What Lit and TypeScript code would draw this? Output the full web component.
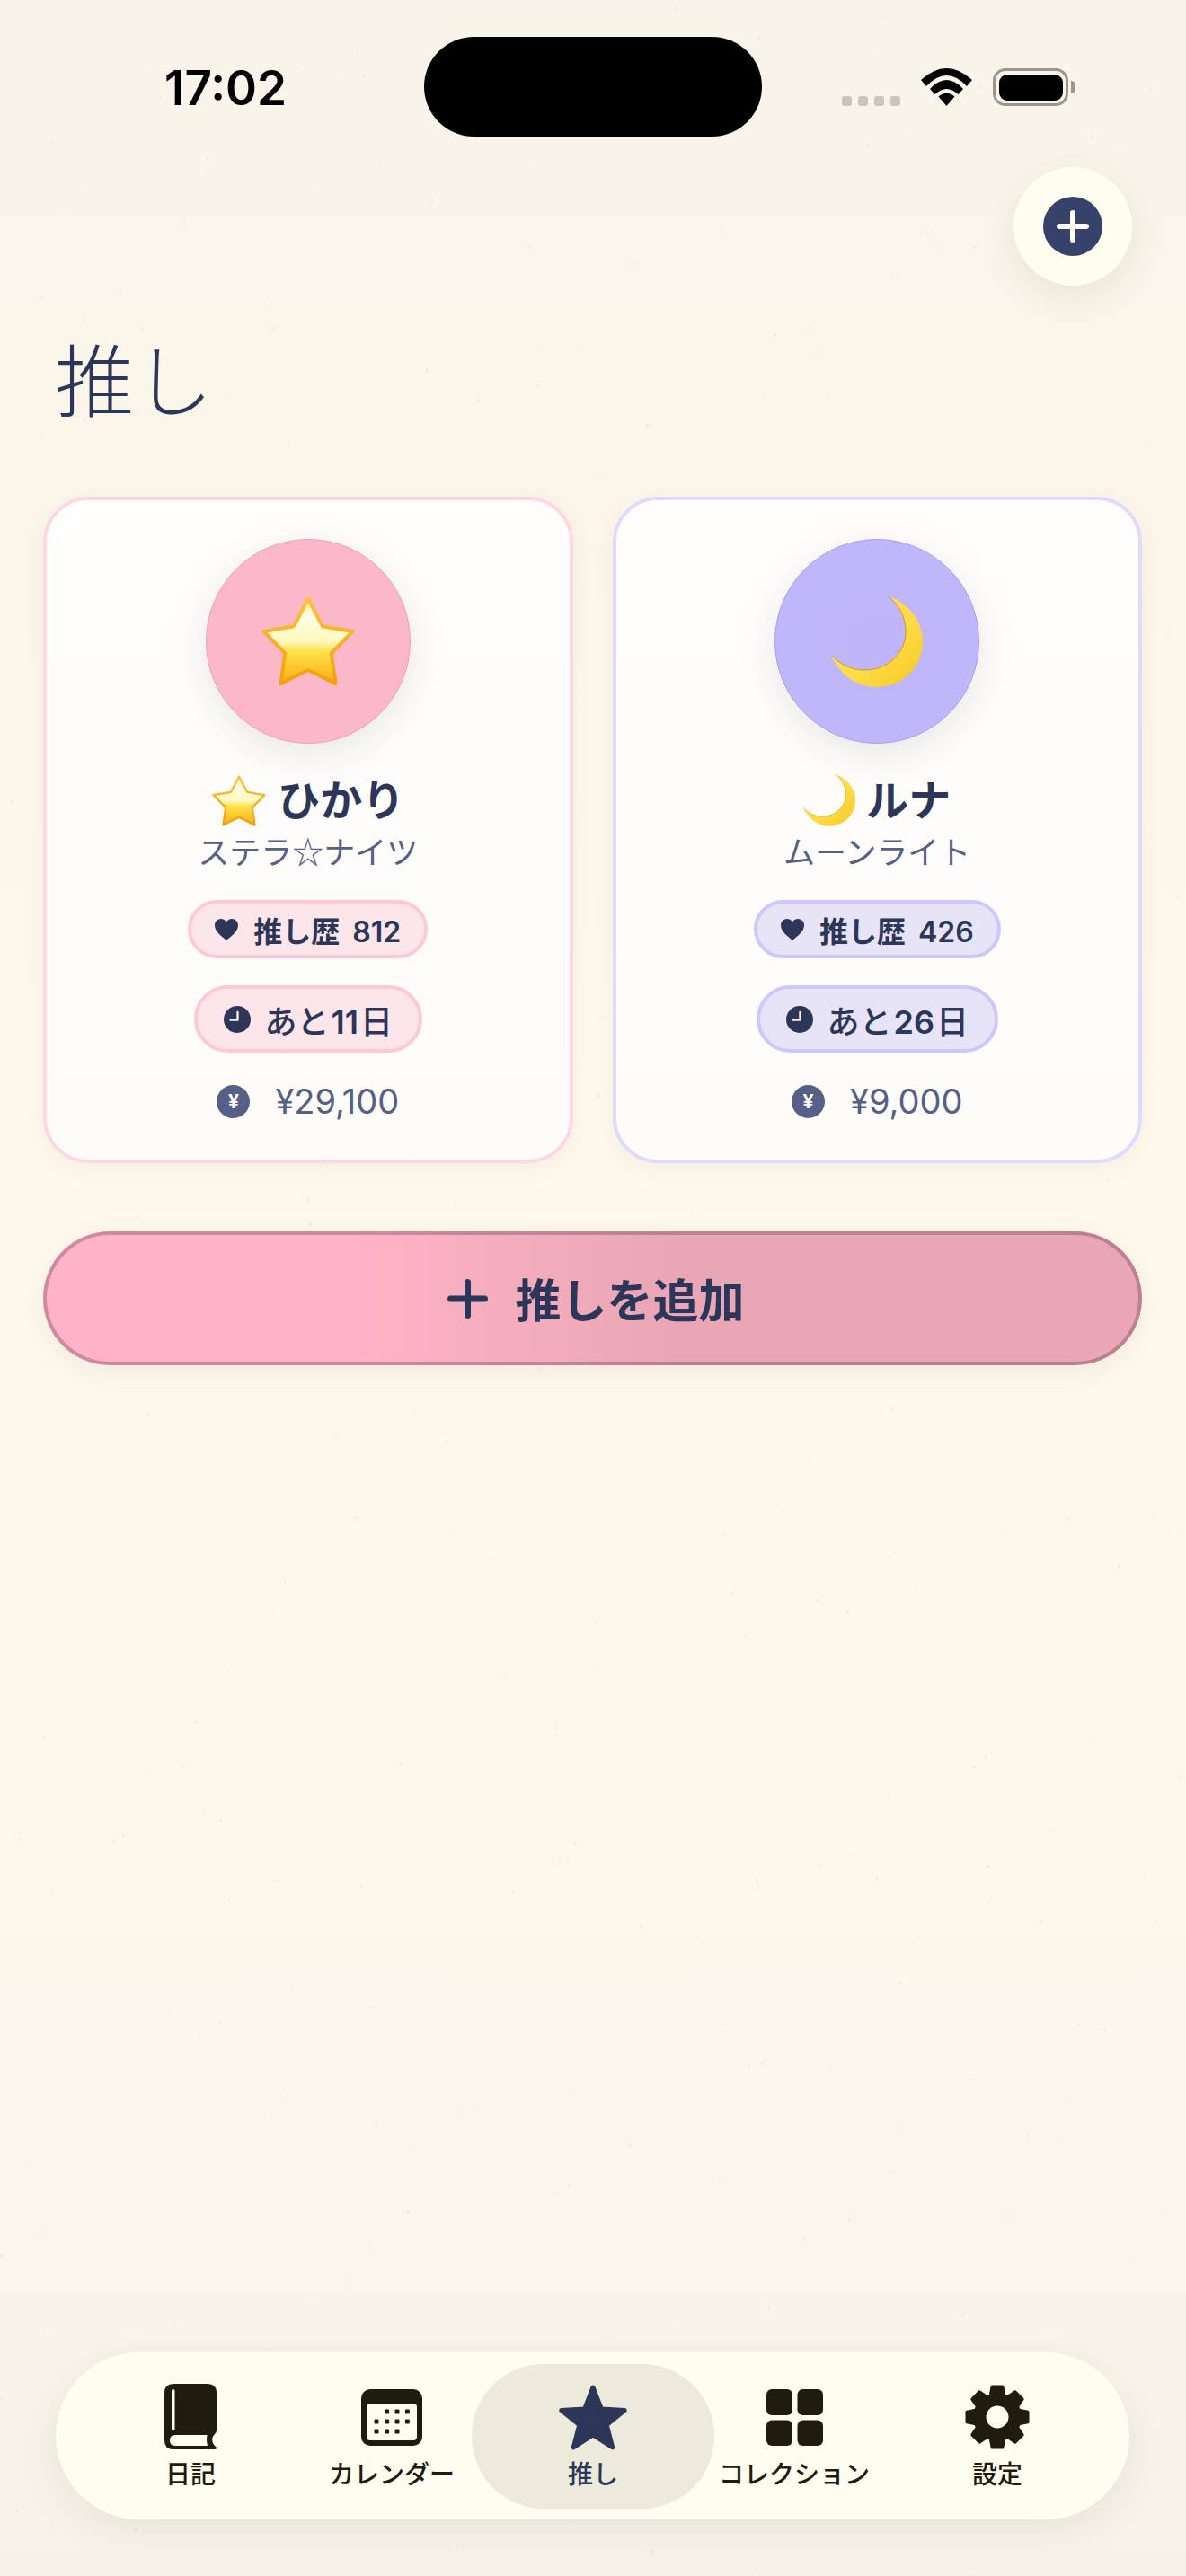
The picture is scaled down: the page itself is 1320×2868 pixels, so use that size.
import { LitElement, html, css, svg } from "lit";
import { customElement } from "lit/decorators.js";

function starPoints(cx: number, cy: number, R: number, r: number): string {
  const pts: string[] = [];
  for (let i = 0; i < 10; i++) {
    const a = -Math.PI / 2 + (i * Math.PI) / 5;
    const rad = i % 2 === 0 ? R : r;
    pts.push(`${(cx + rad * Math.cos(a)).toFixed(2)},${(cy + rad * Math.sin(a)).toFixed(2)}`);
  }
  return pts.join(" ");
}

function gearPoints(cx: number, cy: number): string {
  const pts: string[] = [];
  const teeth = 8;
  const outer = 34.5;
  const root = 25.5;
  for (let i = 0; i < teeth; i++) {
    const c = -Math.PI / 2 + (i * 2 * Math.PI) / teeth;
    const w1 = 0.27;
    const w2 = 0.17;
    [
      [root, c - w1 - 0.04],
      [outer, c - w2],
      [outer, c + w2],
      [root, c + w1 + 0.04],
    ].forEach(([rad, a]) => {
      pts.push(`${(cx + rad * Math.cos(a)).toFixed(2)},${(cy + rad * Math.sin(a)).toFixed(2)}`);
    });
  }
  return pts.join(" ");
}

const specks = (() => {
  let s = 4711;
  const rnd = () => {
    s = (s * 16807) % 2147483647;
    return s / 2147483647;
  };
  const out: { x: number; y: number; r: number; o: number }[] = [];
  for (let i = 0; i < 420; i++) {
    out.push({ x: rnd() * 1320, y: rnd() * 2868, r: 0.7 + rnd() * 0.8, o: 0.03 + rnd() * 0.07 });
  }
  return out;
})();

const emojiStar = (w: number, h: number) => html`
  <svg class="emoji" width=${w} height=${h} viewBox="0 0 108 102">
    <defs>
      <linearGradient id="sg" x1="0" y1="0" x2="0" y2="1">
        <stop offset="0" stop-color="#ffe98f" />
        <stop offset=".2" stop-color="#fffde6" />
        <stop offset=".5" stop-color="#fff8bd" />
        <stop offset=".62" stop-color="#ffe14a" />
        <stop offset="1" stop-color="#f8ad12" />
      </linearGradient>
      <linearGradient id="ss" x1="0" y1="0" x2="0" y2="1">
        <stop offset="0" stop-color="#fcc236" />
        <stop offset="1" stop-color="#f3a010" />
      </linearGradient>
    </defs>
    <polygon
      points=${starPoints(54, 56, 52, 27)}
      fill="url(#sg)"
      stroke="url(#ss)"
      stroke-width="4"
      stroke-linejoin="round"
    />
  </svg>
`;

const emojiMoon = (w: number, h: number) => html`
  <svg class="emoji" width=${w} height=${h} viewBox="0 0 102 101">
    <defs>
      <linearGradient id="mg" x1="0" y1="0" x2="1" y2="1">
        <stop offset="0" stop-color="#ffe55a" />
        <stop offset=".6" stop-color="#fddb45" />
        <stop offset="1" stop-color="#f6c720" />
      </linearGradient>
    </defs>
    <path
      d="M64 0C88 8 102 30 102 50C102 80 78 101 50 101C30 101 10 88 0 65C12 78 25 82 38 82C65 82 85 60 83 36C82 22 76 10 64 0Z"
      fill="url(#mg)"
    />
    <path d="M64 0C76 10 82 22 83 36C85 60 65 82 38 82C25 82 12 78 0 65" fill="none" stroke="#d9951a" stroke-width="1" />
  </svg>
`;

const heart = html`
  <svg class="ic" width="26" height="24" viewBox="0 0 26 24">
    <path
      d="M13 24C9 20 0 14.500 0 7.200C0 3 3.100 0 7 0C9.500 0 11.800 1.300 13 3.500C14.200 1.300 16.500 0 19 0C22.900 0 26 3 26 7.200C26 14.500 17 20 13 24Z"
      fill="#2b3659"
    />
  </svg>
`;

const clock = html`
  <svg class="ic" width="30" height="30" viewBox="0 0 30 30">
    <circle cx="15" cy="15" r="15" fill="#2b3659" />
    <path d="M15.500 7V15.500H7.500" fill="none" stroke="#fdf0f0" stroke-width="2.400" stroke-linecap="round" stroke-linejoin="round" />
  </svg>
`;

interface Oshi {
  cls: string;
  emoji: (w: number, h: number) => unknown;
  big: [number, number];
  small: [number, number];
  name: string;
  sub: string;
  hist: string;
  days: string;
  money: string;
}

const oshis: Oshi[] = [
  { cls: "pink", emoji: emojiStar, big: [108, 102], small: [62, 59], name: "ひかり", sub: "ステラ☆ナイツ", hist: "812", days: "11", money: "¥29,100" },
  { cls: "lav", emoji: emojiMoon, big: [102, 101], small: [58, 58], name: "ルナ", sub: "ムーンライト", hist: "426", days: "26", money: "¥9,000" },
];

@customElement("app-root")
export class AppRoot extends LitElement {
  static styles = css`
    :host {
      display: block;
      width: 1320px;
      font-family: "Noto Sans CJK JP", "Noto Sans", sans-serif;
      color: #2b3659;
    }
    .page {
      position: relative;
      width: 1320px;
      height: 2868px;
      display: flex;
      flex-direction: column;
      overflow: hidden;
      background: linear-gradient(180deg, #f8f4e9 0%, #fcf6ea 22%, #fef8ec 42%, #fef8ec 68%, #f9f5ea 88%, #f5f2e8 100%);
    }
    .specks {
      position: absolute;
      inset: 0;
      pointer-events: none;
    }
    .status,
    .fab-row,
    .title-row,
    .cards,
    .add,
    .nav {
      position: relative;
      flex: none;
    }
    .status {
      height: 186px;
      box-sizing: border-box;
      padding-top: 41px;
      display: grid;
      grid-template-columns: 1fr 376px 1fr;
      align-items: start;
    }
    .time {
      height: 111px;
      padding-left: 183px;
      font-family: "Inter", "Liberation Sans", sans-serif;
      font-weight: 600;
      font-size: 53px;
      line-height: 115px;
      color: #000;
    }
    .island {
      width: 376px;
      height: 111px;
      border-radius: 56px;
      background: #000;
    }
    .sys {
      height: 111px;
      box-sizing: border-box;
      padding: 34px 0 34px 89px;
      display: flex;
      align-items: flex-end;
    }
    .dots {
      display: flex;
      gap: 7px;
      margin-right: 23px;
    }
    .dots i {
      width: 11px;
      height: 11px;
      border-radius: 3px;
      background: #c9c5ba;
    }
    .battery {
      margin-left: 23px;
      width: 84px;
      height: 42px;
      box-sizing: border-box;
      border: 3.500px solid #9c978c;
      border-radius: 14px;
      padding: 3.500px;
      position: relative;
    }
    .battery b {
      display: block;
      height: 100%;
      background: #000;
      border-radius: 9px;
    }
    .battery::after {
      content: "";
      position: absolute;
      left: 84px;
      top: 10.500px;
      width: 5px;
      height: 14px;
      border-radius: 0 5px 5px 0;
      background: #9c978c;
      margin-left: -0.500px;
    }
    .fab-row {
      display: flex;
      justify-content: flex-end;
      padding-right: 60px;
    }
    .fab {
      width: 132px;
      height: 132px;
      border-radius: 50%;
      background: #fffcf0;
      box-shadow: 0 10px 40px rgba(70, 60, 30, 0.09);
      display: flex;
      align-items: center;
      justify-content: center;
    }
    .title-row {
      height: 235px;
      box-sizing: border-box;
      padding: 40px 0 0 61px;
    }
    h1 {
      margin: 0;
      font-size: 88px;
      line-height: 122px;
      font-weight: 300;
      color: #2b3659;
    }
    .cards {
      display: grid;
      grid-template-columns: 1fr 1fr;
      gap: 44px;
      padding: 0 49px 0 48px;
    }
    .card {
      box-sizing: border-box;
      height: 742px;
      border: 4px solid;
      border-radius: 50px;
      padding-top: 43px;
      background: linear-gradient(180deg, #fffefd 0%, #fdfcf9 100%);
      box-shadow: 0 6px 26px rgba(80, 70, 40, 0.05);
      display: flex;
      flex-direction: column;
      align-items: center;
    }
    .card.pink {
      border-color: #fed7e2;
    }
    .card.lav {
      border-color: #e0daff;
    }
    .avatar {
      width: 228px;
      height: 228px;
      box-sizing: border-box;
      border-radius: 50%;
      display: flex;
      align-items: center;
      justify-content: center;
      box-shadow: 0 12px 44px rgba(50, 40, 30, 0.1);
    }
    .pink .avatar {
      background: radial-gradient(circle, #f9b8c8 0%, #fbb8c9 62%, #feb7cb 100%);
      border: 1.500px solid #ec9fb6;
    }
    .lav .avatar {
      background: radial-gradient(circle, #bfb5f8 0%, #c0b6fa 70%, #c2b7fd 100%);
      border: 1.500px solid #a79bf0;
    }
    .name {
      margin-top: 33px;
      height: 60px;
      display: flex;
      align-items: center;
      gap: 12px;
      font-size: 47px;
      font-weight: 700;
      line-height: 60px;
      color: #2b3659;
    }
    .name span {
      margin-bottom: 6px;
    }
    .sub {
      margin-top: 4px;
      height: 46px;
      font-size: 35px;
      line-height: 44px;
      color: #565f85;
    }
    .pill {
      box-sizing: border-box;
      border: 4px solid;
      border-radius: 40px;
      display: flex;
      align-items: center;
      justify-content: center;
      font-family: "Inter", "Noto Sans CJK JP", sans-serif;
      color: #2b3659;
      white-space: pre;
    }
    .pink .pill {
      background: #fce6ea;
      border-color: #fdc8d7;
    }
    .lav .pill {
      background: #e8e4f8;
      border-color: #cfc7fb;
    }
    .pill.hist {
      margin-top: 31px;
      height: 65px;
      padding: 0 26px;
      gap: 17px;
      font-size: 32px;
      font-weight: 600;
    }
    .pill.hist .num {
      margin-left: 14px;
    }
    .pill.days {
      margin-top: 30px;
      height: 75px;
      padding: 0 29px;
      gap: 16px;
      font-size: 36px;
      font-weight: 500;
    }
    .pill.days .num {
      margin: 0 2px;
      font-weight: 600;
    }
    .money {
      margin-top: 36px;
      height: 37px;
      display: flex;
      align-items: center;
      gap: 28px;
      font-family: "Inter", "Noto Sans CJK JP", sans-serif;
      font-size: 38px;
      line-height: 37px;
      color: #565f85;
    }
    .yen {
      width: 37px;
      height: 37px;
      border-radius: 50%;
      background: #565f85;
      color: #fdfcf9;
      font-size: 21px;
      font-weight: 700;
      display: flex;
      align-items: center;
      justify-content: center;
    }
    .add {
      margin: 76px 49px 0 48px;
      height: 149px;
      box-sizing: border-box;
      border: 4px solid rgba(90, 40, 70, 0.3);
      border-radius: 75px;
      padding-left: 8px;
      background: linear-gradient(90deg, #ffb3c6 0%, #ffb3c6 28%, #e9a6b4 58%, #e9a6b4 100%) border-box;
      box-shadow: 0 8px 30px rgba(90, 70, 40, 0.07);
      display: flex;
      align-items: center;
      justify-content: center;
      gap: 30px;
      font-size: 51px;
      line-height: 60px;
      font-weight: 700;
      color: #2b3659;
    }
    .add span {
      margin-bottom: 2px;
    }
    .nav {
      margin: auto 63px 63px 62px;
      height: 186px;
      box-sizing: border-box;
      padding: 0 33px 0 38px;
      border-radius: 93px;
      background: #fffcf0;
      box-shadow: 0 10px 44px rgba(60, 50, 30, 0.08);
      display: flex;
    }
    .tab {
      position: relative;
      width: 224px;
      box-sizing: border-box;
      padding-top: 35px;
      display: flex;
      flex-direction: column;
      align-items: center;
      color: #1f1b0e;
    }
    .tab:last-child {
      margin-left: 2px;
    }
    .tab.on {
      color: #2b3659;
    }
    .tab.on::before {
      content: "";
      position: absolute;
      top: 13px;
      bottom: 12px;
      left: -23px;
      right: -23px;
      border-radius: 80px;
      background: #eceadb;
    }
    .tab-icon {
      position: relative;
      height: 74px;
      display: flex;
      align-items: center;
      justify-content: center;
    }
    .tab-label {
      position: relative;
      margin-top: 9px;
      font-size: 28px;
      line-height: 32px;
      font-weight: 500;
      white-space: nowrap;
    }
  `;

  render() {
    return html`
      <div class="page">
        <svg class="specks" width="1320" height="2868" viewBox="0 0 1320 2868" aria-hidden="true">
          ${specks.map(
            (p) => svg`<ellipse cx=${p.x} cy=${p.y} rx=${p.r} ry=${p.r * 1.6} fill="#7d6a45" opacity=${p.o}></ellipse>`
          )}
        </svg>

        <div class="status">
          <div class="time">17:02</div>
          <div class="island"></div>
          <div class="sys">
            <div class="dots"><i></i><i></i><i></i><i></i></div>
            <svg width="57" height="42" viewBox="0 0 57 42">
              <path d="M28.500 42L19.500 31.500Q28.500 24 37.500 31.500Z" fill="#000" />
              <path d="M10 23Q28.500 3 47 23L41.500 29Q28.500 17 15.500 29Z" fill="#000" />
              <path d="M0 13Q28.500 -13 57 13L51 20Q28.500 -4 6 20Z" fill="#000" />
            </svg>
            <div class="battery"><b></b></div>
          </div>
        </div>

        <div class="fab-row">
          <div class="fab">
            <svg width="66" height="66" viewBox="0 0 66 66">
              <circle cx="33" cy="33" r="33" fill="#36426a" />
              <path d="M33 18V48M18 33H48" stroke="#fffcf0" stroke-width="6" stroke-linecap="round" />
            </svg>
          </div>
        </div>

        <div class="title-row"><h1>推し</h1></div>

        <div class="cards">
          ${oshis.map(
            (o) => html`
              <div class="card ${o.cls}">
                <div class="avatar">${o.emoji(o.big[0], o.big[1])}</div>
                <div class="name">${o.emoji(o.small[0], o.small[1])}<span>${o.name}</span></div>
                <div class="sub">${o.sub}</div>
                <div class="pill hist">${heart}<span>推し歴<span class="num">${o.hist}</span></span></div>
                <div class="pill days">${clock}<span>あと<span class="num">${o.days}</span>日</span></div>
                <div class="money"><span class="yen">¥</span><span>${o.money}</span></div>
              </div>
            `
          )}
        </div>

        <div class="add">
          <svg width="45" height="44" viewBox="0 0 45 44">
            <path d="M22.500 3.500V40.500M3.500 22H41.500" stroke="#2b3659" stroke-width="7" stroke-linecap="round" />
          </svg>
          <span>推しを追加</span>
        </div>

        <div class="nav">
          <div class="tab">
            <div class="tab-icon">
              <svg width="58" height="74" viewBox="0 0 58 74">
                <path d="M10 0H48Q58 0 58 10V52Q58 54 56 56Q50 62 56 69L58 71Q58 73 56 73H10Q0 73 0 63V10Q0 0 10 0Z" fill="#1f1b0e" />
                <path d="M12 57H47.500Q46 63 48 69H12Q6 69 6 63Q6 57 12 57Z" fill="#fffcf0" />
                <rect x="8" y="6" width="3.500" height="46" rx="1.750" fill="#fffcf0" />
              </svg>
            </div>
            <div class="tab-label">日記</div>
          </div>
          <div class="tab">
            <div class="tab-icon">
              <svg width="68" height="63" viewBox="0 0 68 63">
                <rect width="68" height="63" rx="10" fill="#1f1b0e" />
                <rect x="6" y="16" width="56" height="41" rx="4" fill="#fffcf0" />
                ${[
                  [28.6, 25], [40, 25], [51.4, 25],
                  [17, 36], [28.6, 36], [40, 36], [51.4, 36],
                  [17, 47], [28.6, 47], [40, 47],
                ].map(
                  ([x, y]) => svg`<rect x=${x - 2.5} y=${y - 2.5} width="5" height="5" rx="1.200" fill="#1f1b0e"></rect>`
                )}
              </svg>
            </div>
            <div class="tab-label">カレンダー</div>
          </div>
          <div class="tab on">
            <div class="tab-icon">
              <svg width="78" height="74" viewBox="0 0 78 74">
                <polygon points=${starPoints(39, 41, 37, 16)} fill="#2b3659" stroke="#2b3659" stroke-width="5" stroke-linejoin="round" />
              </svg>
            </div>
            <div class="tab-label">推し</div>
          </div>
          <div class="tab">
            <div class="tab-icon">
              <svg width="63" height="63" viewBox="0 0 63 63">
                <rect width="29" height="29" rx="6" fill="#1f1b0e" />
                <rect x="34.500" width="28.500" height="29" rx="6" fill="#1f1b0e" />
                <rect y="34.500" width="29" height="28.500" rx="6" fill="#1f1b0e" />
                <rect x="34.500" y="34.500" width="28.500" height="28.500" rx="6" fill="#1f1b0e" />
              </svg>
            </div>
            <div class="tab-label">コレクション</div>
          </div>
          <div class="tab">
            <div class="tab-icon">
              <svg width="72" height="72" viewBox="0 0 72 72">
                <polygon points=${gearPoints(36, 36)} fill="#1f1b0e" stroke="#1f1b0e" stroke-width="3" stroke-linejoin="round" />
                <circle cx="36" cy="36" r="12.500" fill="#fffcf0" />
              </svg>
            </div>
            <div class="tab-label">設定</div>
          </div>
        </div>
      </div>
    `;
  }
}
